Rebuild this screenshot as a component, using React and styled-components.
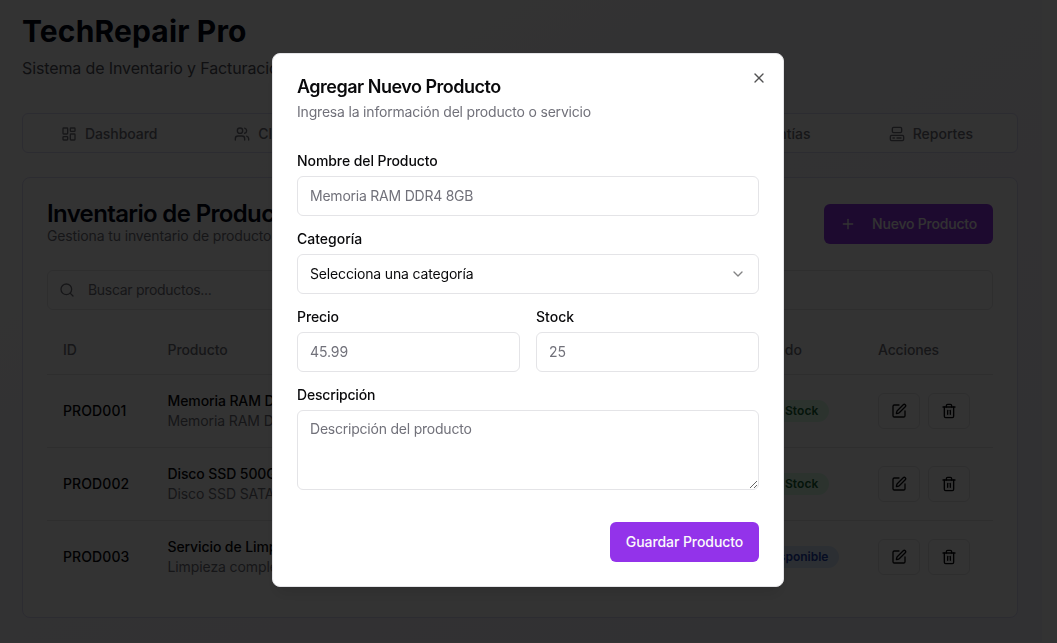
import React from "react";
import styled, { createGlobalStyle } from "styled-components";
import {
  LayoutDashboard,
  Users,
  Package,
  FileText,
  Shield,
  Computer,
  Plus,
  Search,
  SquarePen,
  Trash2,
  X,
  ChevronDown,
} from "lucide-react";

const GlobalStyle = createGlobalStyle`
  *, *::before, *::after { box-sizing: border-box; }
  html, body { margin: 0; height: 100%; overflow: hidden; }
  body {
    font-family: Inter, "Liberation Sans", sans-serif;
    font-size: 14px;
    line-height: 20px;
    color: #09090b;
    background: #fff;
    -webkit-font-smoothing: antialiased;
  }
  h1, h2, h3, p { margin: 0; }
  button, input, textarea { font: inherit; letter-spacing: inherit; }
`;

const Page = styled.div`
  width: 1042px;
  height: 642px;
  padding: 13px 24px 24px 22px;
  overflow: hidden;
  background: linear-gradient(to bottom right, #ffffff 10%, #f8f7ff 50%, #f5f3ff);
`;

const Header = styled.header`
  display: flex;
  flex-direction: column;
  gap: 7px;
  height: 76px;
`;

const AppTitle = styled.h1`
  font-size: 30px;
  font-weight: 700;
  line-height: 36px;
  letter-spacing: ${(p) => p.$track || 0}px;
  color: #020617;
`;

const Tagline = styled.p`
  font-size: 16px;
  line-height: 24px;
  letter-spacing: ${(p) => p.$track || 0}px;
  color: #52525b;
`;

const TabBar = styled.nav`
  display: grid;
  grid-template-columns: repeat(6, 1fr);
  height: 40px;
  margin: 24px 0;
  padding: 4px;
  border: 1px solid #dcdaf5;
  border-radius: 6px;
  background: #fcfcfd;
`;

const Tab = styled.button`
  display: flex;
  align-items: center;
  justify-content: center;
  gap: 8px;
  padding: 1px 0 0;
  border: 0;
  border-radius: 4px;
  background: ${(p) => (p.$active ? "#f3e8ff" : "transparent")};
  color: #71717a;
  font-weight: 500;
  letter-spacing: ${(p) => p.$track || 0}px;
`;

const Card = styled.section`
  width: 996px;
  height: 441px;
  padding: 24px;
  border: 1px solid #dcdaf5;
  border-radius: 8px;
  background: #fff;
`;

const CardHeader = styled.div`
  display: flex;
  align-items: center;
  justify-content: space-between;
  height: 44px;
  margin-bottom: 24px;
`;

const CardTitle = styled.h2`
  font-size: 24px;
  font-weight: 600;
  line-height: 24px;
  letter-spacing: ${(p) => p.$track || 0}px;
  color: #020617;
`;

const Muted = styled.p`
  color: #71717a;
  white-space: nowrap;
  letter-spacing: ${(p) => p.$track || 0}px;
`;

const PrimaryButton = styled.button`
  display: inline-flex;
  align-items: center;
  justify-content: center;
  gap: 16px;
  width: ${(p) => p.$width}px;
  height: 40px;
  padding: 0;
  border: 0;
  border-radius: 6px;
  background: #9333ea;
  color: #fafafa;
  font-weight: 500;
  white-space: nowrap;
  letter-spacing: ${(p) => p.$track || 0}px;
`;

const SearchBox = styled.div`
  display: flex;
  align-items: center;
  gap: 13px;
  height: 40px;
  margin-bottom: 16px;
  padding: 0 11px;
  border: 1px solid #e4e4e7;
  border-radius: 6px;
  color: #71717a;
  letter-spacing: ${(p) => p.$track || 0}px;
`;

const Row = styled.div`
  display: grid;
  grid-template-columns: 104.5px 219.5px 120px 124px 125px 122px 131px;
  align-items: center;
  height: ${(p) => (p.$head ? 49 : p.$last ? 72 : 73)}px;
  border-bottom: ${(p) => (p.$last ? "0" : "1px solid #e4e4e7")};
  color: ${(p) => (p.$head ? "#71717a" : "inherit")};
  font-weight: ${(p) => (p.$head ? 500 : 400)};
`;

const Cell = styled.div`
  padding: 0 16px;
  white-space: nowrap;
  font-weight: ${(p) => (p.$strong ? 500 : "inherit")};
  letter-spacing: ${(p) => p.$track || 0}px;
`;

const ProductName = styled.div`
  font-weight: 500;
  letter-spacing: ${(p) => p.$track || 0}px;
`;

const Badge = styled.span`
  display: inline-flex;
  align-items: center;
  height: 22px;
  padding: 0 11px;
  border-radius: 11px;
  font-size: 12px;
  font-weight: 600;
  letter-spacing: ${(p) => p.$track || 0}px;
  color: ${(p) => (p.$blue ? "#1e40af" : "#166534")};
  background: ${(p) => (p.$blue ? "#dbeafe" : "#dcfce7")};
`;

const Actions = styled.div`
  display: flex;
  gap: 8px;
`;

const IconButton = styled.button`
  display: flex;
  align-items: center;
  justify-content: center;
  width: 42px;
  height: 36px;
  padding: 0;
  border: 1px solid #e4e4e7;
  border-radius: 6px;
  background: #fff;
  color: #09090b;
`;

const Overlay = styled.div`
  position: fixed;
  inset: 0;
  display: flex;
  justify-content: center;
  align-items: flex-start;
  padding: 53px 1px 0 0;
  background: rgba(0, 0, 0, 0.8);
`;

const Dialog = styled.div`
  position: relative;
  display: flex;
  flex-direction: column;
  width: 512px;
  height: 534px;
  padding: 24px;
  border: 1px solid #e4e4e7;
  border-radius: 8px;
  background: #fff;
  box-shadow: 0 10px 15px -3px rgba(0, 0, 0, 0.1), 0 4px 6px -4px rgba(0, 0, 0, 0.1);
`;

const DialogTitle = styled.h3`
  margin-bottom: 6px;
  font-size: 18px;
  font-weight: 600;
  line-height: 18px;
  letter-spacing: ${(p) => p.$track || 0}px;
`;

const CloseButton = styled.button`
  position: absolute;
  top: 16px;
  right: 16px;
  display: flex;
  padding: 0;
  border: 0;
  background: none;
  color: #09090b;
  opacity: 0.7;
`;

const Form = styled.form`
  display: flex;
  flex-direction: column;
  gap: 16px;
  padding: 32px 0;
`;

const Columns = styled.div`
  display: grid;
  grid-template-columns: 1fr 1fr;
  gap: 16px;
`;

const Field = styled.div`
  display: flex;
  flex-direction: column;
  gap: 8px;
  min-width: 0;
`;

const Label = styled.label`
  font-weight: 500;
  line-height: 14px;
  letter-spacing: ${(p) => p.$track || 0}px;
`;

const Input = styled.input`
  width: 100%;
  height: 40px;
  padding: 0 12px 1px;
  border: 1px solid #e4e4e7;
  border-radius: 6px;
  background: #fff;
  letter-spacing: ${(p) => p.$track || 0}px;
  &::placeholder { color: #71717a; opacity: 1; }
`;

const Select = styled.button`
  display: flex;
  align-items: center;
  justify-content: space-between;
  width: 100%;
  height: 40px;
  padding: 0 12px;
  border: 1px solid #e4e4e7;
  border-radius: 6px;
  background: #fff;
  color: #09090b;
  letter-spacing: ${(p) => p.$track || 0}px;
  svg { opacity: 0.5; }
`;

const TextArea = styled.textarea`
  display: block;
  width: 100%;
  height: 80px;
  padding: 8px 12px;
  border: 1px solid #e4e4e7;
  border-radius: 6px;
  background: #fff;
  resize: vertical;
  letter-spacing: ${(p) => p.$track || 0}px;
  &::placeholder { color: #71717a; opacity: 1; }
`;

const DialogFooter = styled.div`
  display: flex;
  justify-content: flex-end;
`;

const tabs = [
  { label: "Dashboard", icon: LayoutDashboard, track: -0.05 },
  { label: "Clientes", icon: Users },
  { label: "Inventario", icon: Package, active: true },
  { label: "Facturas", icon: FileText },
  { label: "Garantías", icon: Shield },
  { label: "Reportes", icon: Computer },
];

const products = [
  { id: "PROD001", name: "Memoria RAM DDR4", detail: "Memoria RAM DDR4", category: "Memoria", price: "$45.99", stock: "25", status: "En Stock" },
  { id: "PROD002", name: "Disco SSD 500GB", detail: "Disco SSD SATA", category: "Disco", price: "$89.99", stock: "15", status: "En Stock" },
  { id: "PROD003", name: "Servicio de Limpieza", detail: "Limpieza completa", category: "Servicio", price: "$25.00", stock: "N/A", status: "Disponible", blue: true },
];

export default function App() {
  return (
    <>
      <GlobalStyle />
      <Page>
        <Header>
          <AppTitle $track={0.15}>TechRepair Pro</AppTitle>
          <Tagline $track={-0.12}>Sistema de Inventario y Facturación</Tagline>
        </Header>
        <TabBar>
          {tabs.map(({ label, icon: Icon, active, track }) => (
            <Tab key={label} $active={active} $track={track}>
              <Icon size={16} />
              {label}
            </Tab>
          ))}
        </TabBar>
        <Card>
          <CardHeader>
            <div>
              <CardTitle $track={-0.65}>Inventario de Productos</CardTitle>
              <Muted $track={-0.13}>Gestiona tu inventario de productos</Muted>
            </div>
            <PrimaryButton $width={169} $track={-0.2}>
              <Plus size={16} />
              Nuevo Producto
            </PrimaryButton>
          </CardHeader>
          <SearchBox $track={-0.3}>
            <Search size={16} />
            Buscar productos...
          </SearchBox>
          <Row $head>
            <Cell>ID</Cell>
            <Cell $track={-0.1}>Producto</Cell>
            <Cell>Categoría</Cell>
            <Cell>Precio</Cell>
            <Cell>Stock</Cell>
            <Cell>Estado</Cell>
            <Cell $track={-0.15}>Acciones</Cell>
          </Row>
          {products.map((p, i) => (
            <Row key={p.id} $last={i === products.length - 1}>
              <Cell $strong $track={0.1}>{p.id}</Cell>
              <Cell>
                <ProductName $track={-0.1}>{p.name}</ProductName>
                <Muted $track={-0.1}>{p.detail}</Muted>
              </Cell>
              <Cell>{p.category}</Cell>
              <Cell>{p.price}</Cell>
              <Cell>{p.stock}</Cell>
              <Cell>
                <Badge $blue={p.blue} $track={p.blue ? 0 : 0.1}>{p.status}</Badge>
              </Cell>
              <Cell>
                <Actions>
                  <IconButton aria-label="Editar"><SquarePen size={16} /></IconButton>
                  <IconButton aria-label="Eliminar"><Trash2 size={16} /></IconButton>
                </Actions>
              </Cell>
            </Row>
          ))}
        </Card>
      </Page>
      <Overlay>
        <Dialog role="dialog">
          <DialogTitle $track={-0.5}>Agregar Nuevo Producto</DialogTitle>
          <Muted $track={-0.19}>Ingresa la información del producto o servicio</Muted>
          <Form>
            <Field>
              <Label $track={-0.08}>Nombre del Producto</Label>
              <Input $track={-0.23} placeholder="Memoria RAM DDR4 8GB" />
            </Field>
            <Field>
              <Label>Categoría</Label>
              <Select $track={-0.16} type="button">
                Selecciona una categoría
                <ChevronDown size={16} />
              </Select>
            </Field>
            <Columns>
              <Field>
                <Label $track={-0.1}>Precio</Label>
                <Input $track={-0.1} placeholder="45.99" />
              </Field>
              <Field>
                <Label>Stock</Label>
                <Input placeholder="25" />
              </Field>
            </Columns>
            <Field>
              <Label $track={-0.18}>Descripción</Label>
              <TextArea $track={-0.22} placeholder="Descripción del producto" />
            </Field>
          </Form>
          <DialogFooter>
            <PrimaryButton $width={149} $track={-0.07}>Guardar Producto</PrimaryButton>
          </DialogFooter>
          <CloseButton aria-label="Cerrar"><X size={16} /></CloseButton>
        </Dialog>
      </Overlay>
    </>
  );
}
